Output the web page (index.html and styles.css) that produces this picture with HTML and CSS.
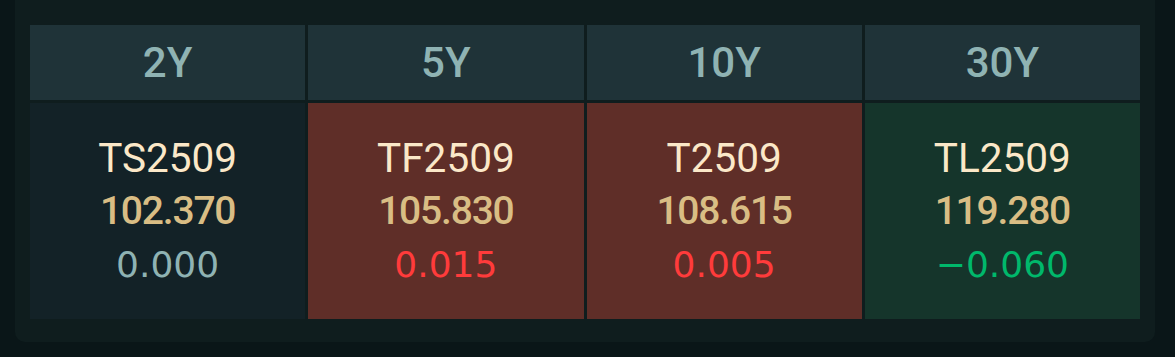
FILE: index.html
```html
<!DOCTYPE html>
<html>
<head>
<meta charset="utf-8">
<link rel="stylesheet" href="styles.css">
</head>
<body>
<div class="panel">
  <div class="grid">
    <div class="head">2Y</div>
    <div class="head">5Y</div>
    <div class="head">10Y</div>
    <div class="head">30Y</div>
    <div class="cell flat">
      <div class="code">TS2509</div>
      <div class="price">102.370</div>
      <div class="chg chg-flat">0.000</div>
    </div>
    <div class="cell up">
      <div class="code">TF2509</div>
      <div class="price">105.830</div>
      <div class="chg chg-up">0.015</div>
    </div>
    <div class="cell up">
      <div class="code">T2509</div>
      <div class="price">108.615</div>
      <div class="chg chg-up">0.005</div>
    </div>
    <div class="cell down">
      <div class="code">TL2509</div>
      <div class="price">119.280</div>
      <div class="chg chg-down">−0.060</div>
    </div>
  </div>
</div>
</body>
</html>
```

FILE: styles.css
```css
html, body {
  margin: 0;
  padding: 0;
  background: #0a1618;
  font-family: Roboto, "Liberation Sans", sans-serif;
}
.panel {
  margin-left: 15px;
  width: 1110px;
  height: 294px;
  padding: 25px 15px 23px 15px;
  background: #0f1d1e;
  border-radius: 0 0 10px 10px;
}
.grid {
  display: grid;
  grid-template-columns: repeat(4, 1fr);
  grid-template-rows: 75px 216px;
  column-gap: 3px;
  row-gap: 3px;
}
.head {
  background: #1f3338;
  color: #8fb3b3;
  font-size: 42px;
  font-weight: 500;
  display: flex;
  align-items: center;
  justify-content: center;
}
.cell {
  display: flex;
  flex-direction: column;
  align-items: center;
  justify-content: center;
  font-size: 40px;
  line-height: 53px;
}
.flat { background: #132227; }
.up { background: #5f2e28; }
.down { background: #15352b; }
.code { color: #fbe8c8; font-weight: 400; font-size: 40.5px; }
.price { color: #d9bd84; font-weight: 500; font-size: 39px; letter-spacing: -1.2px; }
.chg { font-family: "DejaVu Sans", sans-serif; font-weight: 400; font-size: 36px; }
.chg-flat { color: #8fb3b3; }
.chg-up { color: #ff3b3b; }
.chg-down { color: #00b86b; }
```
